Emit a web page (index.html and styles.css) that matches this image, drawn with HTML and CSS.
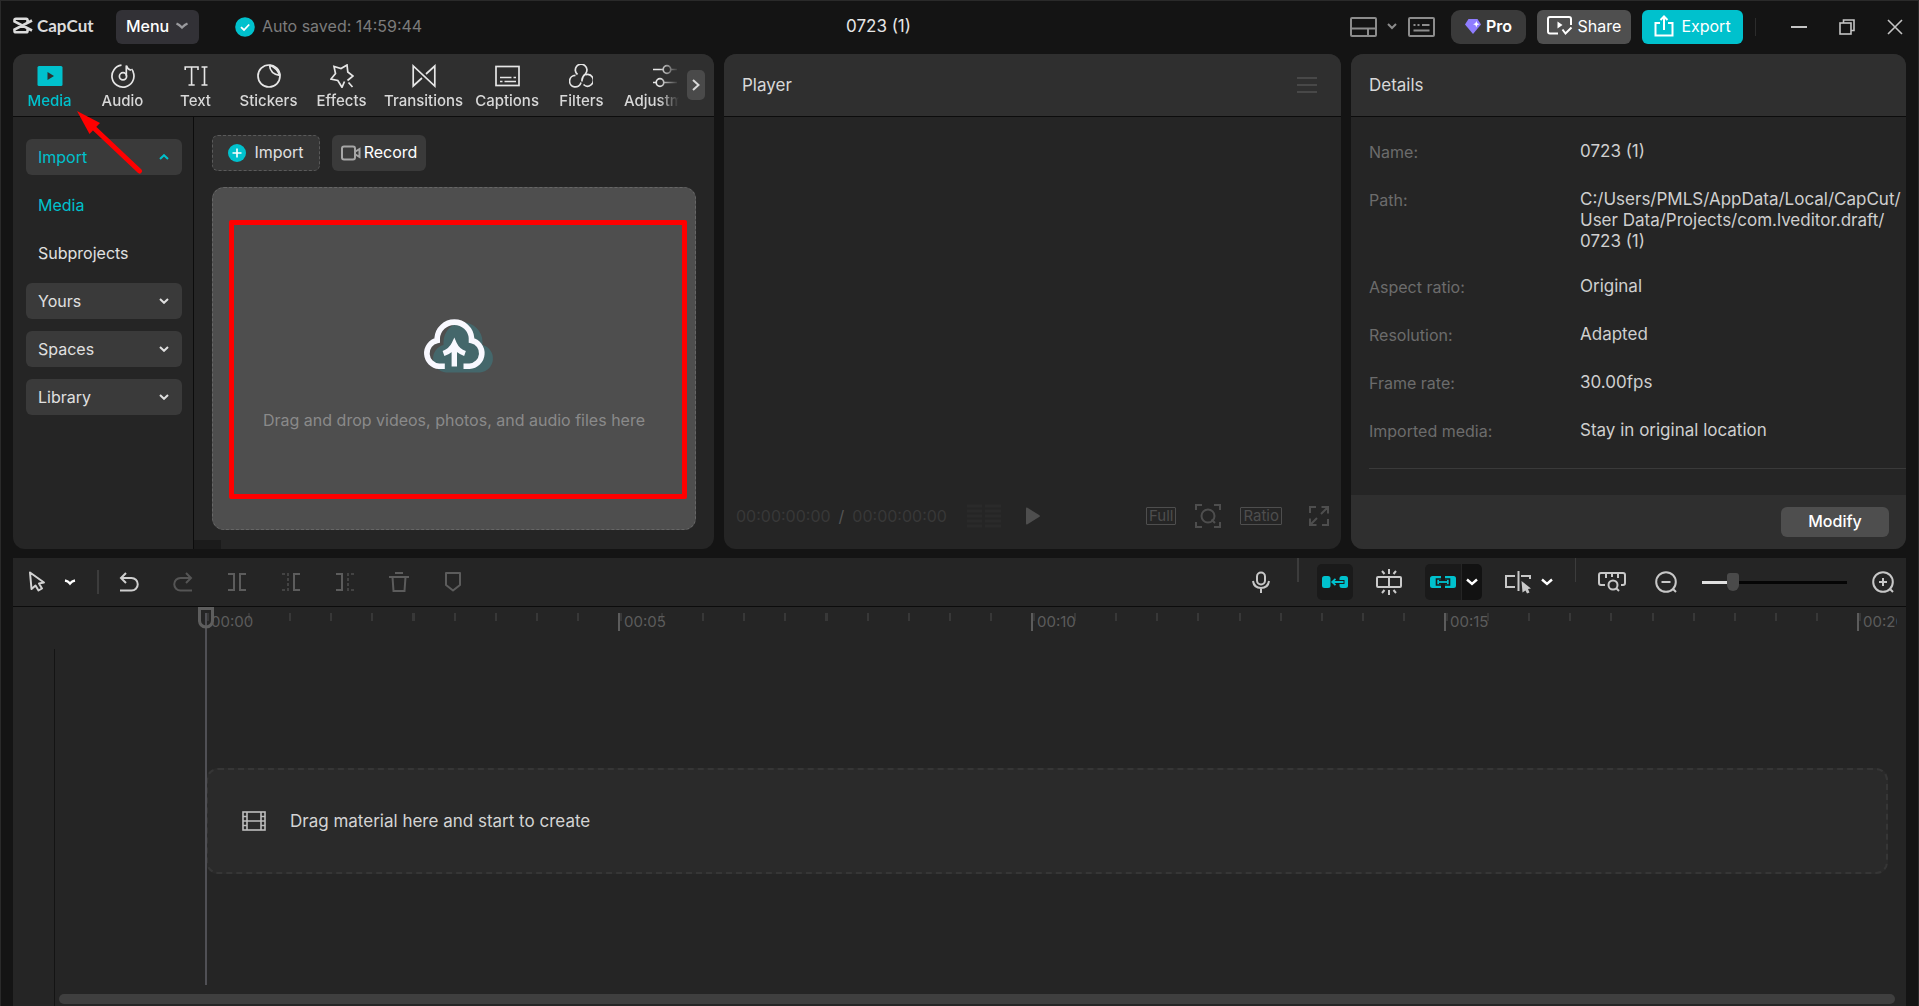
FILE: index.html
```html
<!DOCTYPE html>
<html lang="en">
<head>
  <meta charset="UTF-8">
  <meta name="viewport" content="width=device-width, initial-scale=1.0">
  <title>CapCut - 0723 (1)</title>
  <link rel="stylesheet" href="styles.css">
</head>
<body>
  <!-- Title bar -->
  <header class="titlebar">
    <div class="titlebar-left">
      <div class="logo">
        <svg width="20" height="17" viewBox="0 0 20 17" fill="none" stroke="#dcdcdc" stroke-width="2.6">
          <path d="M14.5 5V3Q14.500 1.700 13.200 1.700H3Q1.500 1.700 1.500 3V4.500L19 13.500M14.500 12V14Q14.500 15.300 13.200 15.300H3Q1.500 15.300 1.500 14V12.500L19 3.500"/>
        </svg>
        <span>CapCut</span>
      </div>
      <button class="btn btn-menu">Menu
        <svg width="14" height="8" viewBox="0 0 14 8" fill="none" stroke="#9a9a9e" stroke-width="2.4"><path d="M1.500 1.500Q4 2.500 7 5.500Q10 2.500 12.500 1.500"/></svg>
      </button>
      <div class="saved">
        <svg width="20" height="20" viewBox="0 0 20 20"><circle cx="10" cy="10" r="9.800" fill="#00c1cd"/><path d="M6 10.200L9 13L14.200 7.500" fill="none" stroke="#fff" stroke-width="1.800"/></svg>
        <span>Auto saved: 14:59:44</span>
      </div>
    </div>
    <h1 class="project-title">0723 (1)</h1>
    <div class="titlebar-right">
      <button class="icon-plain layout" aria-label="Layout">
        <svg width="27" height="20" viewBox="0 0 27 20" fill="none" stroke="#8c8c8c" stroke-width="2"><rect x="1" y="1" width="25" height="18" rx="1"/><path d="M1 11.500H26M18 11.500V19"/></svg>
        <svg width="10" height="7" viewBox="0 0 10 7" fill="none" stroke="#8c8c8c" stroke-width="2"><path d="M1 1L5 5L9 1"/></svg>
      </button>
      <button class="icon-plain" aria-label="Shortcuts">
        <svg width="27" height="20" viewBox="0 0 27 20" fill="none" stroke="#8c8c8c" stroke-width="2"><rect x="1" y="1" width="25" height="18" rx="1"/><path d="M5.500 8H7.500M9.500 8H11.500M14 8H21.500M5.500 13.500H21.500" stroke-width="1.800"/></svg>
      </button>
      <button class="btn btn-pro">
        <svg width="16" height="15" viewBox="0 0 16 15"><path d="M3.500 0H12.500L16 5.500L8 15L0 5.500Z" fill="#8f7dff"/><path d="M11.300 2L12.200 4.300L14.500 5.200L12.200 6.100L11.300 8.400L10.400 6.100L8.100 5.200L10.400 4.300Z" fill="#fff"/></svg>
        Pro
      </button>
      <button class="btn btn-share">
        <svg width="26" height="20" viewBox="0 0 26 20" fill="none" stroke="#fff" stroke-width="2"><path d="M11 17.500H3Q1 17.500 1 15.500V3Q1 1 3 1H22Q24 1 24 3V9M15.500 13.500L18.500 17.500L24.500 11.500"/><path d="M10.500 5.500L15.500 9L10.500 12.500Z" fill="#fff" stroke="none"/></svg>
        Share
      </button>
      <button class="btn btn-export">
        <svg width="20" height="22" viewBox="0 0 20 22" fill="none" stroke="#fff" stroke-width="2"><path d="M6 8H1.500V20.500H18.500V8H14M10 15V2M6.500 5L10 1.500L13.500 5"/></svg>
        Export
      </button>
      <span class="titlebar-sep"></span>
      <button class="icon-plain window-btn" aria-label="Minimize">
        <svg width="16" height="16" viewBox="0 0 16 16" stroke="#c4c4c4" stroke-width="2"><path d="M0 8H16"/></svg>
      </button>
      <button class="icon-plain window-btn" aria-label="Restore">
        <svg width="16" height="16" viewBox="0 0 16 16" fill="none" stroke="#c4c4c4" stroke-width="1.600"><rect x="1" y="4" width="11" height="11"/><path d="M4.500 4V1H15V11.500H12"/></svg>
      </button>
      <button class="icon-plain window-btn" aria-label="Close">
        <svg width="16" height="16" viewBox="0 0 16 16" stroke="#c4c4c4" stroke-width="1.600"><path d="M1 1L15 15M15 1L1 15"/></svg>
      </button>
    </div>
  </header>

  <main class="workspace">
    <!-- Media panel -->
    <section class="panel media-panel">
      <nav class="panel-head tabs">
        <div class="tab-list">
          <button class="tab active">
            <svg width="26" height="24" viewBox="0 0 26 24"><rect x="0.500" y="2" width="25" height="20" rx="1.500" fill="#00c1cd"/><path d="M10.500 8L17 12L10.500 16Z" fill="#2f2f2f"/></svg>
            Media
          </button>
          <button class="tab">
            <svg width="24" height="24" viewBox="0 0 24 24" fill="none" stroke="#e6e6e6" stroke-width="1.700"><path d="M10.500 1.200A11 11 0 1 0 22.500 9Q22 6.500 20.500 5"/><circle cx="12" cy="12.300" r="3.600"/><path d="M15.300 12.300V1.500Q16 4.800 20 6.200"/></svg>
            Audio
          </button>
          <button class="tab">
            <svg width="24" height="24" viewBox="0 0 24 24" fill="none" stroke="#e6e6e6" stroke-width="1.600"><path d="M1.200 6V3H14V6M7.600 3V21M4.500 21H10.700M17.500 3H23.500M20.500 3V21M17.500 21H23.500"/></svg>
            Text
          </button>
          <button class="tab">
            <svg width="24" height="24" viewBox="0 0 24 24" fill="none" stroke="#e6e6e6" stroke-width="1.700"><circle cx="12" cy="12" r="11"/><path d="M12.500 1Q13 10 22.800 11.500M12.500 1Q20 4 22.800 11.500"/></svg>
            Stickers
          </button>
          <button class="tab">
            <svg width="24" height="24" viewBox="0 0 24 24" fill="none" stroke="#e6e6e6" stroke-width="1.700"><path d="M17.500 16.500L23 12L17.800 8L17 1L11 4.500L4 2.500L5.500 9.500L1 15L7.800 16.500L12 23.300L14.500 17.500M18.500 18.500L22.500 23"/></svg>
            Effects
          </button>
          <button class="tab">
            <svg width="24" height="24" viewBox="0 0 24 24" fill="none" stroke="#e6e6e6" stroke-width="1.700"><path d="M10 14L1.200 22V2L22.800 22V2L14 10"/></svg>
            Transitions
          </button>
          <button class="tab">
            <svg width="25" height="24" viewBox="0 0 25 24" fill="none" stroke="#e6e6e6" stroke-width="1.700"><rect x="1" y="2.500" width="23" height="19"/><path d="M5 13.500H16.500M18.500 13.500H21M5 17.500H7.500M9.500 17.500H21"/></svg>
            Captions
          </button>
          <button class="tab">
            <svg width="24" height="24" viewBox="0 0 24 24" fill="none" stroke="#e6e6e6" stroke-width="1.700"><path d="M8.500 10.500A5.800 5.800 0 1 1 16.500 9.800Q12.500 13 13 17.500M6.500 11.300A5.800 5.800 0 1 0 12 18.500M16.500 10.800A5.800 5.800 0 1 1 14.500 20.500"/></svg>
            Filters
          </button>
          <button class="tab">
            <svg width="24" height="24" viewBox="0 0 24 24" fill="none" stroke="#e6e6e6" stroke-width="1.700"><path d="M0 5.500H10M18 5.500H24M0 18.500H3M11 18.500H24"/><circle cx="14" cy="5.500" r="3.800"/><circle cx="7" cy="18.500" r="3.800"/></svg>
            Adjustment
          </button>
        </div>
        <button class="tab-next" aria-label="More tabs">
          <svg width="8" height="12" viewBox="0 0 8 12" fill="none" stroke="#d8d8d8" stroke-width="2"><path d="M1 1L6.500 6L1 11"/></svg>
        </button>
      </nav>

      <div class="media-body">
        <aside class="sidebar">
          <button class="side-item boxed active">Import
            <svg width="10" height="6" viewBox="0 0 10 6" fill="none" stroke="currentColor" stroke-width="2"><path d="M1 5L5 1.200L9 5"/></svg>
          </button>
          <button class="side-item active">Media</button>
          <button class="side-item">Subprojects</button>
          <button class="side-item boxed">Yours
            <svg width="10" height="6" viewBox="0 0 10 6" fill="none" stroke="currentColor" stroke-width="2"><path d="M1 1L5 4.800L9 1"/></svg>
          </button>
          <button class="side-item boxed">Spaces
            <svg width="10" height="6" viewBox="0 0 10 6" fill="none" stroke="currentColor" stroke-width="2"><path d="M1 1L5 4.800L9 1"/></svg>
          </button>
          <button class="side-item boxed">Library
            <svg width="10" height="6" viewBox="0 0 10 6" fill="none" stroke="currentColor" stroke-width="2"><path d="M1 1L5 4.800L9 1"/></svg>
          </button>
        </aside>

        <div class="media-content">
          <div class="actions">
            <button class="btn btn-import">
              <svg width="18" height="18" viewBox="0 0 18 18"><circle cx="9" cy="9" r="9" fill="#00c1cd"/><path d="M9 4.500V13.500M4.500 9H13.500" stroke="#fff" stroke-width="1.600"/></svg>
              Import
            </button>
            <button class="btn btn-record">
              <svg width="20" height="16" viewBox="0 0 20 16" fill="none" stroke="#a6a6a6" stroke-width="2"><rect x="1" y="1.500" width="13" height="13" rx="2"/><path d="M14.500 6.500L18.500 4V12L14.500 9.500"/></svg>
              Record
            </button>
          </div>
          <div class="dropzone">
            <svg class="cloud" width="72" height="56" viewBox="0 0 72 56">
              <path d="M23 54.500A14 14 0 0 1 20.500 27V24A19.500 19.500 0 0 1 59.500 24V27A14 14 0 0 1 57 54.500Z" fill="#44676b"/>
              <path d="M21.800 48.200H16A13 13 0 0 1 14.200 22.500V20A17.200 17.200 0 0 1 48.500 20V22.500A13 13 0 0 1 46.500 48.200H40.500" fill="none" stroke="#f8f8ff" stroke-width="5.600"/>
              <path d="M31.300 48.500V27M20.500 35.500Q28 33 31.300 26Q34.500 33 42 35.500" fill="none" stroke="#f8f8ff" stroke-width="5.400"/>
            </svg>
            <p>Drag and drop videos, photos, and audio files here</p>
            <div class="highlight"></div>
          </div>
        </div>
      </div>

      <svg class="arrow" width="66" height="64" viewBox="0 0 66 64">
        <path d="M62.500 60L18 18" stroke="#ff0000" stroke-width="5" stroke-linecap="round"/>
        <path d="M0 0L23 12L12.500 23Z" fill="#ff0000"/>
      </svg>
    </section>

    <!-- Player panel -->
    <section class="panel player-panel">
      <div class="panel-head">
        <h2>Player</h2>
        <button class="icon-plain" aria-label="Player menu">
          <svg width="20" height="16" viewBox="0 0 20 16" stroke="#484848" stroke-width="2"><path d="M0 1H20M0 8H20M0 15H20"/></svg>
        </button>
      </div>
      <div class="player-view"></div>
      <div class="player-controls">
        <div class="timecode">
          <span>00:00:00:00</span><span class="slash">/</span><span>00:00:00:00</span>
          <svg width="34" height="24" viewBox="0 0 34 24" stroke="#2a2a2a" stroke-width="3"><path d="M0 2H15M18 2H34M0 7H15M18 7H34M0 12H15M18 12H34M0 17H15M18 17H34M0 22H15M18 22H34"/></svg>
        </div>
        <button class="icon-plain" aria-label="Play">
          <svg width="16" height="18" viewBox="0 0 16 18" fill="#4e4e4e"><path d="M1 1.500Q1 0 2.500 0.800L14.500 8.200Q15.300 9 14.500 9.800L2.500 17.200Q1 18 1 16.500Z"/></svg>
        </button>
        <div class="player-tools">
          <button class="outlined">Full</button>
          <button class="icon-plain" aria-label="Zoom to fit">
            <svg width="26" height="24" viewBox="0 0 26 24" fill="none" stroke="#4e4e4e" stroke-width="2"><path d="M1 6V1H7M19 1H25V6M25 18V23H19M7 23H1V18M16.500 15.500L20 19"/><circle cx="13" cy="12" r="6.500"/></svg>
          </button>
          <button class="outlined ratio">Ratio</button>
          <button class="icon-plain fullscreen" aria-label="Full screen">
            <svg width="20" height="20" viewBox="0 0 20 20" fill="none" stroke="#4e4e4e" stroke-width="2"><path d="M1 7V1H7M13 19H19V13M12 8L18.500 1.500M12.500 1H19V7.500M8 12L1.500 18.500M1 12.500V19H7.500"/></svg>
          </button>
        </div>
      </div>
    </section>

    <!-- Details panel -->
    <section class="panel details-panel">
      <div class="panel-head"><h2>Details</h2></div>
      <dl class="details">
        <div class="row"><dt>Name:</dt><dd>0723 (1)</dd></div>
        <div class="row"><dt>Path:</dt><dd>C:/Users/PMLS/AppData/Local/CapCut/<br>User Data/Projects/com.lveditor.draft/<br>0723 (1)</dd></div>
        <div class="row"><dt>Aspect ratio:</dt><dd>Original</dd></div>
        <div class="row"><dt>Resolution:</dt><dd>Adapted</dd></div>
        <div class="row"><dt>Frame rate:</dt><dd>30.00fps</dd></div>
        <div class="row"><dt>Imported media:</dt><dd>Stay in original location</dd></div>
      </dl>
      <div class="details-footer">
        <button class="btn btn-modify">Modify</button>
      </div>
    </section>
  </main>

  <!-- Timeline -->
  <section class="timeline">
    <div class="toolbar">
      <div class="tools">
        <div class="tool-group cursor-group">
          <button class="tool" aria-label="Select">
            <svg width="18" height="22" viewBox="0 0 18 22" fill="none" stroke="#d2d2d2" stroke-width="2" stroke-linejoin="round"><path d="M2 1.500L16 11.500L11 12.500L14 17.500L10.500 19.500L7.500 14.500L3.500 18Z"/></svg>
          </button>
          <button class="tool-arrow" aria-label="Select options">
            <svg width="12" height="7" viewBox="0 0 12 7" fill="none" stroke="#fff" stroke-width="2.400"><path d="M1 1.500Q4 2 6 4.500Q8 2 11 1.500"/></svg>
          </button>
        </div>
        <span class="sep sep-left"></span>
        <button class="tool" aria-label="Undo">
          <svg width="20" height="20" viewBox="0 0 20 20" fill="none" stroke="#cfcfcf" stroke-width="2"><path d="M7 1L2 6L7 11M2.500 6H12.500A6 6 0 0 1 12.500 18.500H1"/></svg>
        </button>
        <button class="tool" aria-label="Redo">
          <svg width="20" height="20" viewBox="0 0 20 20" fill="none" stroke="#555" stroke-width="2"><path d="M13 1L18 6L13 11M17.500 6H7.500A6 6 0 0 0 7.500 18.500H19"/></svg>
        </button>
        <button class="tool" aria-label="Split">
          <svg width="18" height="18" viewBox="0 0 18 18" fill="none" stroke="#5c5c5c" stroke-width="2"><path d="M0 1H6V17H0M18 1H12V17H18"/></svg>
        </button>
        <button class="tool" aria-label="Delete left">
          <svg width="18" height="18" viewBox="0 0 18 18" fill="none" stroke="#5c5c5c" stroke-width="2"><path d="M18 1H12V17H18"/><path d="M0 1H6V17H0" stroke="#434343" stroke-dasharray="3 2"/></svg>
        </button>
        <button class="tool" aria-label="Delete right">
          <svg width="18" height="18" viewBox="0 0 18 18" fill="none" stroke="#5c5c5c" stroke-width="2"><path d="M0 1H6V17H0"/><path d="M18 1H12V17H18" stroke="#434343" stroke-dasharray="3 2"/></svg>
        </button>
        <button class="tool" aria-label="Delete">
          <svg width="20" height="20" viewBox="0 0 20 20" fill="none" stroke="#5c5c5c" stroke-width="2"><path d="M0 5H20M6 1H14M3.500 5L4.500 19H15.500L16.500 5"/></svg>
        </button>
        <button class="tool" aria-label="Marker">
          <svg width="16" height="20" viewBox="0 0 16 20" fill="none" stroke="#5c5c5c" stroke-width="2" stroke-linejoin="round"><path d="M1 1H15V13L8 18.500L1 13Z"/></svg>
        </button>
      </div>

      <div class="tools">
        <button class="tool" aria-label="Record voiceover">
          <svg width="18" height="22" viewBox="0 0 18 22" fill="none" stroke="#c8c8c8" stroke-width="2"><rect x="5" y="1.500" width="8" height="12" rx="4"/><path d="M1 10Q2 17 9 17Q16 17 17 10M9 17V22"/></svg>
        </button>
        <span class="sep sep-top"></span>
        <button class="tool pressed" aria-label="Main track magnet">
          <svg width="28" height="12" viewBox="0 0 28 12"><rect x="1" y="0" width="8.500" height="12" rx="2.500" fill="#00c1cd"/><rect x="18.500" y="0" width="8.500" height="12" rx="2.500" fill="#00c1cd"/><path d="M17 6H23.500" stroke="#1a1a1a" stroke-width="4"/><path d="M22.500 6H11.500M14.500 2.800L11.200 6L14.500 9.200" fill="none" stroke="#00c1cd" stroke-width="1.800"/></svg>
        </button>
        <button class="tool" aria-label="Auto snapping">
          <svg width="28" height="26" viewBox="0 0 28 26" fill="none" stroke="#cacaca" stroke-width="2"><rect x="2" y="8" width="24" height="10" rx="1"/><path d="M14 8V18M14 0V5M14 21V26M7 2L9.500 5M21 2L18.500 5M7 24L9.500 21M21 24L18.500 21"/></svg>
        </button>
        <div class="tool-group">
          <button class="tool pressed link-main" aria-label="Linkage">
            <svg width="28" height="12" viewBox="0 0 28 12"><path d="M3.500 0H12V12H3.500Q1 12 1 9.500V2.500Q1 0 3.500 0ZM16 0H24.500Q27 0 27 2.500V9.500Q27 12 24.500 12H16Z" fill="#00c1cd"/><path d="M12.500 3H7.500V9H12.500M15.500 3H20.500V9H15.500" fill="none" stroke="#1a1a1a" stroke-width="1.600"/><path d="M10 6H18" stroke="#1a1a1a" stroke-width="4.400"/><path d="M9.500 6H18.500" stroke="#00c1cd" stroke-width="1.800"/></svg>
          </button>
          <button class="tool-arrow link-arrow" aria-label="Linkage options">
            <svg width="12" height="8" viewBox="0 0 12 8" fill="none" stroke="#fff" stroke-width="2.400"><path d="M1 1.500L6 6L11 1.500"/></svg>
          </button>
        </div>
        <div class="tool-group">
          <button class="tool" aria-label="Preview axis">
            <svg width="28" height="24" viewBox="0 0 28 24" fill="none" stroke="#c8c8c8" stroke-width="2"><path d="M11 6H2V17H11M17 6H26V9M14.500 1V21"/><path d="M17.500 11L27 18.500L24 19L25.500 22.500L23 23.500L21.500 20.500L18.500 22.500Z" fill="#c8c8c8" stroke="none"/></svg>
          </button>
          <button class="tool-arrow" aria-label="Preview axis options">
            <svg width="12" height="8" viewBox="0 0 12 8" fill="none" stroke="#fff" stroke-width="2.400"><path d="M1 1.500L6 6L11 1.500"/></svg>
          </button>
        </div>
        <span class="sep sep-top thin"></span>
        <button class="tool" aria-label="Fit timeline">
          <svg width="28" height="20" viewBox="0 0 28 20" fill="none" stroke="#c8c8c8" stroke-width="2"><path d="M7 13H3Q1 13 1 11V3Q1 1 3 1H25Q27 1 27 3V11Q27 13 25 13H23M8 1V6M14 1V5M20 1V6"/><circle cx="15" cy="13" r="4.500"/><path d="M18 16L21 19"/></svg>
        </button>
        <button class="tool" aria-label="Zoom out">
          <svg width="22" height="22" viewBox="0 0 22 22" fill="none" stroke="#c8c8c8" stroke-width="2"><circle cx="11" cy="11" r="9.800"/><path d="M6.500 11H15.500M17.500 17.500L21 21"/></svg>
        </button>
        <input class="zoom-slider" type="range" min="0" max="100" value="19" aria-label="Timeline zoom">
        <button class="tool" aria-label="Zoom in">
          <svg width="22" height="22" viewBox="0 0 22 22" fill="none" stroke="#c8c8c8" stroke-width="2"><circle cx="11" cy="11" r="9.800"/><path d="M7 11H15M11 7V15M17.500 17.500L21 21"/></svg>
        </button>
      </div>
    </div>

    <div class="timeline-body">
      <div class="track-heads"></div>
      <div class="tracks">
        <div class="ruler">
          <span>00:00</span><span>00:05</span><span>00:10</span><span>00:15</span><span>00:20</span>
        </div>
        <div class="track-drop">
          <svg width="24" height="20" viewBox="0 0 24 20" fill="none" stroke="#bdbdbd" stroke-width="1.600"><rect x="1" y="1" width="22" height="18"/><path d="M5 1V19M19 1V19M5 10H19M1 5.500H5M1 10H5M1 14.500H5M19 5.500H23M19 10H23M19 14.500H23"/></svg>
          <p>Drag material here and start to create</p>
        </div>
        <div class="playhead">
          <svg width="16" height="22" viewBox="0 0 16 22" fill="none" stroke="#5e5e5e" stroke-width="3"><path d="M1.500 1.500H14.500V14Q14 19.500 8 20Q2 19.500 1.500 14Z"/></svg>
        </div>
      </div>
      <div class="scrollbar"></div>
    </div>
  </section>
</body>
</html>
```
FILE: styles.css
```css
* {
  margin: 0;
  padding: 0;
  box-sizing: border-box;
  font-family: Inter, "Liberation Sans", sans-serif;
}

body {
  min-height: 100vh;
  display: grid;
  grid-template-rows: 53px minmax(0, 495fr) minmax(0, 457fr);
  padding: 0 12px;
  border: 1px solid #2a2a2a;
  border-bottom: none;
  background-color: #141414;
  color: #d8d8d8;
  font-size: 16px;
  line-height: 21px;
  overflow: hidden;
}

button {
  border: none;
  background: none;
  color: inherit;
  font-size: 16px;
  line-height: 21px;
  cursor: pointer;
}

svg {
  display: block;
  flex-shrink: 0;
}

h1, h2 {
  font-size: 17px;
  font-weight: 400;
}

/* Title bar */
.titlebar {
  display: grid;
  grid-template-columns: 1fr auto 1fr;
  align-items: center;
  padding-bottom: 2px;
}

.titlebar-left, .titlebar-right, .logo, .saved {
  display: flex;
  align-items: center;
}

.logo {
  gap: 4px;
  width: 103px;
  padding-bottom: 3px;
  color: #dcdcdc;
}

.logo span {
  font-family: Lato, sans-serif;
  font-weight: 700;
  font-size: 17px;
}

.btn {
  display: flex;
  align-items: center;
  justify-content: center;
  height: 34px;
  padding-bottom: 1px;
  border-radius: 6px;
  white-space: nowrap;
}

.btn-menu {
  gap: 6px;
  width: 83px;
  background-color: #323136;
  color: #fff;
  font-weight: 500;
}

.saved {
  gap: 7px;
  margin-left: 36px;
  color: #7c7c7c;
}

.project-title {
  color: #e6e6e6;
  padding-right: 162px;
}

.titlebar-right {
  justify-content: flex-end;
}

.icon-plain {
  display: flex;
  align-items: center;
}

.layout {
  gap: 10px;
  margin-right: 11px;
}

.btn-pro {
  gap: 5px;
  width: 75px;
  margin: 0 11px 0 16px;
  border-radius: 9px;
  background-color: #3a3a3a;
  color: #fff;
  font-weight: 600;
}

.btn-share {
  gap: 5px;
  width: 94px;
  margin-right: 11px;
  background-color: #4f4f4f;
  color: #fff;
}

.btn-export {
  gap: 7px;
  width: 101px;
  background-color: #00c1cd;
  color: #fff;
}

.titlebar-sep {
  width: 1px;
  height: 18px;
  margin: 0 35px 0 12px;
  background-color: #2c2c2c;
}

.window-btn + .window-btn {
  margin-left: 32px;
}

.window-btn:last-child {
  margin-right: 3px;
}

/* Panels */
.workspace {
  display: grid;
  grid-template-columns: 701fr 617fr 555fr;
  gap: 10px;
}

.panel {
  position: relative;
  display: flex;
  flex-direction: column;
  min-width: 0;
  border-radius: 12px;
  background-color: #252525;
  overflow: hidden;
}

.panel-head {
  display: flex;
  align-items: center;
  justify-content: space-between;
  height: 63px;
  padding: 0 24px 0 18px;
  border-bottom: 1px solid #0c0c0c;
  background-color: #2f2f2f;
  color: #d8d8d8;
}

.tabs {
  padding: 0 9px 0 6px;
}

.tab-list {
  display: flex;
  gap: 12px;
  width: 660px;
  padding-top: 4px;
  overflow: hidden;
  mask-image: linear-gradient(90deg, #000 97%, transparent 100%);
}

.tab {
  display: flex;
  flex-direction: column;
  align-items: center;
  gap: 2px;
  flex-shrink: 0;
  min-width: 61px;
  font-size: 15px;
  font-weight: 500;
}

.tab.active, .side-item.active {
  color: #00c1cd;
}

.tab-next {
  display: flex;
  align-items: center;
  justify-content: center;
  width: 18px;
  height: 30px;
  border-radius: 5px;
  background-color: #4a4a4a;
}

.media-body {
  display: flex;
  flex: 1;
}

.sidebar {
  display: flex;
  flex-direction: column;
  gap: 12px;
  width: 181px;
  padding: 22px 11px 0 13px;
  border-right: 1px solid #0c0c0c;
}

.side-item {
  display: flex;
  align-items: center;
  justify-content: space-between;
  height: 36px;
  padding: 0 13px 0 12px;
  border-radius: 6px;
  color: #e0e0e0;
}

.side-item.boxed {
  background-color: #3a3a3a;
}

.media-content {
  position: relative;
  display: flex;
  flex-direction: column;
  flex: 1;
  gap: 16px;
  padding: 18px 18px 19px;
}

.media-content::after {
  content: "";
  position: absolute;
  left: 0;
  bottom: 0;
  width: 27px;
  height: 9px;
  background-color: #1b1b1b;
}

.actions {
  display: flex;
  gap: 12px;
}

.btn-import {
  gap: 8px;
  width: 108px;
  height: 36px;
  border: 1px dashed #5a5a5a;
  background-color: #363636;
  color: #e0e0e0;
}

.btn-record {
  gap: 3px;
  width: 94px;
  height: 36px;
  background-color: #3a3a3a;
  color: #fff;
}

.dropzone {
  position: relative;
  display: flex;
  flex-direction: column;
  align-items: center;
  justify-content: center;
  gap: 36px;
  flex: 1;
  padding-top: 32px;
  border: 1px dashed #666;
  border-radius: 12px;
  background-color: #4e4e4e;
  color: #8a8a8a;
}

.cloud {
  margin-left: 10px;
}

/* Red frame over the drop area */
.highlight {
  position: absolute;
  inset: 32px 8px 30px 16px;
  border: 5px solid #ff0000;
  border-radius: 2px;
}

.arrow {
  position: absolute;
  left: 64px;
  top: 57px;
}

/* Player */
.player-view {
  flex: 1;
}

.player-controls {
  display: grid;
  grid-template-columns: 1fr auto 1fr;
  align-items: center;
  height: 66px;
  padding: 0 12px;
}

.timecode {
  display: flex;
  align-items: center;
  color: #383838;
}

.timecode .slash {
  margin: 0 8px;
  color: #555;
}

.timecode svg {
  margin-left: 20px;
}

.player-tools {
  display: flex;
  align-items: center;
  justify-content: flex-end;
  gap: 19px;
}

.outlined {
  height: 18px;
  padding: 0 2px;
  border: 1px solid #4e4e4e;
  border-radius: 1px;
  color: #4e4e4e;
  font-size: 15px;
  line-height: 16px;
}

.fullscreen {
  margin-left: 8px;
}

/* Details */
.details {
  flex: 1;
  display: flex;
  flex-direction: column;
  gap: 24px;
  padding: 24px 0 0 18px;
}

.row {
  display: flex;
  min-height: 24px;
}

.row:last-child {
  min-height: 49px;
  border-bottom: 1px solid #3a3a3a;
}

.row dt {
  flex: 0 0 211px;
  padding-top: 1px;
  color: #6c6c6c;
}

.row dd {
  color: #cfcfcf;
  font-size: 17px;
  white-space: nowrap;
}

.details-footer {
  display: flex;
  align-items: center;
  justify-content: flex-end;
  height: 54px;
  padding-right: 17px;
  background-color: #2f2f2f;
}

.btn-modify {
  width: 108px;
  height: 30px;
  background-color: #4e4e4e;
  color: #fff;
  font-weight: 500;
}

/* Timeline */
.timeline {
  display: flex;
  flex-direction: column;
  min-width: 0;
  margin-top: 9px;
  background-color: #252525;
}

.toolbar {
  display: flex;
  justify-content: space-between;
  height: 49px;
  padding: 0 5px 0 6px;
  border-bottom: 1px solid #0c0c0c;
}

.tools {
  display: flex;
  align-items: center;
  gap: 18px;
}

.tool-group {
  display: flex;
  align-items: center;
}

.cursor-group {
  gap: 6px;
}

.cursor-group .tool-arrow {
  width: 18px;
}

.tool {
  display: flex;
  align-items: center;
  justify-content: center;
  width: 36px;
  height: 36px;
  border-radius: 5px;
}

.tool-arrow {
  display: flex;
  align-items: center;
  justify-content: center;
  width: 21px;
  height: 36px;
}

.pressed {
  background-color: #1a1a1a;
}

.link-main {
  border-radius: 5px 0 0 5px;
}

.link-arrow {
  width: 20px;
  margin-left: 1px;
  border-radius: 0 5px 5px 0;
  background-color: #121212;
}

.sep {
  width: 2px;
  height: 24px;
  background-color: #3c3c3c;
}

.sep-left {
  margin-right: -6px;
}

.sep-top {
  align-self: flex-start;
}

.sep-top.thin {
  width: 1px;
}

.zoom-slider {
  appearance: none;
  width: 145px;
  height: 18px;
  background: linear-gradient(90deg, #e0e0e0 20%, #050505 20%) center / 100% 3px no-repeat;
}

.zoom-slider::-webkit-slider-thumb {
  appearance: none;
  width: 12px;
  height: 18px;
  border-radius: 3px 3px 6px 6px;
  background-color: #4a4a4a;
}

.timeline-body {
  display: grid;
  grid-template-columns: 42px minmax(0, 1fr);
  grid-template-rows: 1fr 12px;
  flex: 1;
}

.track-heads {
  grid-row: 1 / 3;
  margin-top: 42px;
  border-right: 1px solid #141414;
}

.tracks {
  position: relative;
  display: flex;
  flex-direction: column;
  padding: 6px 9px 0 150px;
}

.ruler {
  display: flex;
  overflow: hidden;
  color: #5c5c5c;
  font-size: 15px;
}

.ruler span {
  flex: 0 0 413px;
  height: 18px;
  padding-left: 4px;
  border-left: 2px solid #5c5c5c;
  background: repeating-linear-gradient(90deg, #383838 0 2px, transparent 2px 10%) 0 0 / 100% 8px no-repeat;
  line-height: 18px;
}

.track-drop {
  display: flex;
  align-items: center;
  gap: 24px;
  height: 106px;
  margin: 137px 9px 0 1px;
  padding: 0 34px;
  border: 2px dashed #363636;
  border-radius: 12px;
  background-color: #2a2a2a;
  color: #d4d4d4;
  font-size: 17px;
}

.playhead {
  position: absolute;
  left: 143px;
  top: 0;
  bottom: 9px;
  width: 16px;
  background: linear-gradient(#505055, #505055) 7px 6px / 2px 100% no-repeat;
}

.scrollbar {
  height: 10px;
  margin: 0 11px 0 4px;
  border-radius: 5px;
  background-color: #3f3f3f;
}
```
